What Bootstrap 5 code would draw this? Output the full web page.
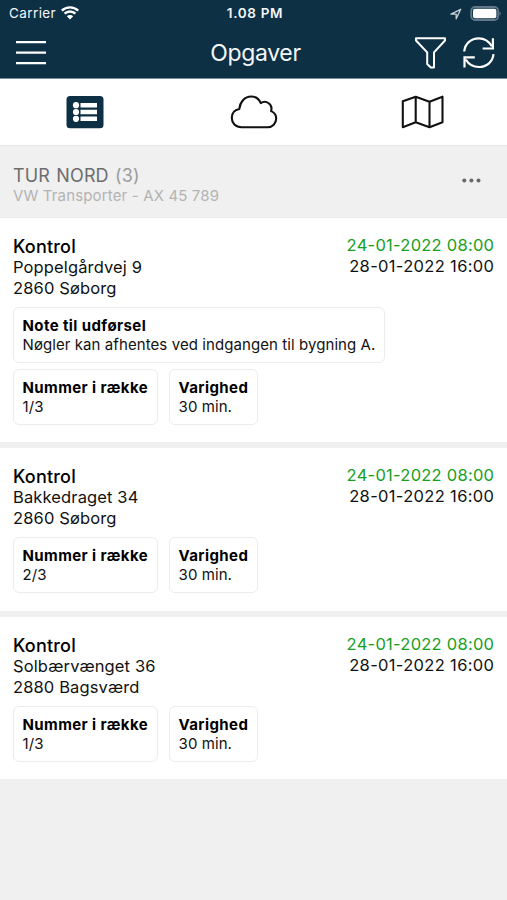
<!DOCTYPE html>
<html lang="da">
<head>
<meta charset="utf-8">
<meta name="viewport" content="width=device-width, initial-scale=1">
<title>Opgaver</title>
<link href="https://cdn.jsdelivr.net/npm/bootstrap@5.3.0/dist/css/bootstrap.min.css" rel="stylesheet">
<style>
body{font-family:Inter,"Liberation Sans",sans-serif;background:#f0f0f0;color:#111;font-size:16.5px;line-height:21px;min-height:900px}
svg{display:block;fill:none}
.top{background:#0d3045;color:#f4f7f9;height:79px;border-bottom:1px solid #7393a1}
.status{height:27px;font-size:13px;padding:0 6px 0 9px}
.status>*,.bar>*{flex:1 1 0}
.carrier{font-size:13.5px;letter-spacing:.4px}
.clock{font-size:13.5px;letter-spacing:.65px}
.bar{height:51px;padding:0 12px 0 16px}
.bar h1{font-size:23px;line-height:28px;font-weight:400;letter-spacing:-.35px}
.tabs{height:66px}
.tour{height:73px;padding:19px 26px 0 13px;border-top:1px solid #e6e6e6;border-bottom:1px solid #e9e9e9}
.tour h2{font-size:18px;line-height:21px;font-weight:400;letter-spacing:.15px;word-spacing:1px;color:#6d6d6d}
.tour h2 span{color:#9b9b9b}
.tour p{font-size:15px;line-height:20px;letter-spacing:.15px;color:#b3b3b3}
.more{margin-top:13px}
.task{padding:17px 13px 17.4px}
.task h3{font-size:18px;line-height:23px;margin-bottom:-1px;font-weight:500;letter-spacing:.2px;color:#000}
.address{letter-spacing:.13px}
.list{gap:6px}
.start,.due{letter-spacing:.25px;margin-right:-.25px}
.due{letter-spacing:.33px}
.start{color:#17a01c}
.info{border:1px solid #ececec;border-radius:6px;padding:8px 8.500px;height:56px;font-size:15px;line-height:19px;letter-spacing:.08px}
.info b{font-weight:700;color:#000;letter-spacing:.4px}
.boxes{gap:11.500px}
.second{margin-top:6px}
</style>
</head>
<body>
<header class="top">
  <div class="status d-flex align-items-center">
    <div class="d-flex align-items-center"><span class="carrier">Carrier</span>
      <svg class="ms-1" width="20" height="15" viewBox="0 0 20 15"><path d="M1.800 4.700a11.700 11.700 0 0 1 16.400 0M4.600 7.700a7.700 7.700 0 0 1 10.800 0" stroke="#fff" stroke-width="2.400"/><path d="M6.800 10.300a4.600 4.600 0 0 1 6.400 0L10 13.500z" fill="#fff"/></svg></div>
    <div class="text-center fw-semibold clock">1.08 PM</div>
    <div class="d-flex align-items-center justify-content-end gap-1">
      <svg class="me-1" width="12" height="12" viewBox="0 0 12 12"><path d="M1 6.200 10.700 1.300 6.200 10.800V6.200z" stroke="#c5d0d7" stroke-width="1.300" stroke-linejoin="round"/></svg>
      <svg width="31" height="15" viewBox="0 0 31 15"><rect x="1.200" y="1" width="27" height="13" rx="4" stroke="#607887" stroke-width="1.800"/><rect x="3" y="2.800" width="23.400" height="9.400" rx="2" fill="#fff"/><path d="M29.500 5.500v4q1.300-.5 1.300-2t-1.300-2z" fill="#607887"/></svg>
    </div>
  </div>
  <div class="bar d-flex align-items-center">
    <div><svg width="30" height="26" viewBox="0 0 30 26" stroke="#fff" stroke-width="2.300"><path d="M0 2.200h30M0 12.700h30M0 23.200h30"/></svg></div>
    <h1 class="m-0 text-center">Opgaver</h1>
    <div class="d-flex justify-content-end align-items-center">
      <svg width="32" height="32" viewBox="0 0 32 32" stroke="#fff" stroke-width="2" stroke-linejoin="round"><path d="M1 1.200h29v2.300L19 15.400V30.500h-3.200L12.200 27V15.400L1 3.500z"/></svg>
      <svg class="ms-3" width="32" height="32" viewBox="0 0 32 32" stroke="#fff" stroke-width="2.200"><path d="M1.200 14.500C2 6.500 8.300 1.300 15.700 1.300c5.700 0 10.300 3 13.100 8M29.900 1.300v10.200H19.600M30.500 17.200c-.8 8-7.100 12.800-14.500 12.800-5.600 0-10.300-2.500-13.200-7.500M1.500 30.500V20.300h10.300"/></svg>
    </div>
  </div>
</header>
<nav class="tabs row g-0 bg-white align-items-center">
  <div class="col d-flex justify-content-center"><svg width="38" height="34" viewBox="0 0 38 34"><rect x=".5" y=".9" width="37" height="32.300" rx="3.500" fill="#0d3045"/><g fill="#fff"><circle cx="10" cy="10.200" r="3.100"/><circle cx="10" cy="17" r="3.100"/><circle cx="10" cy="23.800" r="3.100"/><path d="M14.500 8H31v4.400H14.500zM14.500 14.800H31v4.400H14.500zM14.500 21.600H31v4.400H14.500z"/></g></svg></div>
  <div class="col d-flex justify-content-center"><svg width="48" height="34" viewBox="0 0 48 34" stroke="#111" stroke-width="2.100" stroke-linejoin="round"><path d="M11.500 32.200C5.500 32.200 1.800 28 1.800 23c0-4.800 3-8.200 7.500-9C10 6.500 15 1.500 21.200 1.500c4.500 0 7.800 2.400 9.600 6.600 5.300-3.500 12.300 1.200 10.300 8 3.200 1.300 5.100 4 5.100 7.400 0 4.900-3.700 8.700-8.600 8.700z"/></svg></div>
  <div class="col d-flex justify-content-center"><svg width="44" height="34" viewBox="0 0 44 34" stroke="#111" stroke-width="2.100" stroke-linejoin="round"><path d="M1.800 6.300 14.700 1.700l13.800 5.100 13-5.100v25.500l-13 5-13.800-5-12.900 5zM14.700 1.700v25.500M28.500 6.800v25.400"/></svg></div>
</nav>
<section class="tour d-flex justify-content-between">
  <div><h2 class="m-0">TUR NORD <span>(3)</span></h2><p class="m-0">VW Transporter - AX 45 789</p></div>
  <svg class="more" width="19" height="5" viewBox="0 0 19 5"><g fill="#686868"><circle cx="2.300" cy="2.500" r="2"/><circle cx="9.400" cy="2.500" r="2"/><circle cx="16.500" cy="2.500" r="2"/></g></svg>
</section>
<main class="list d-flex flex-column">
  <article class="task bg-white">
    <div class="d-flex justify-content-between"><div class="address"><h3>Kontrol</h3><div>Poppelgårdvej 9</div><div>2860 Søborg</div></div>
      <div class="text-end"><div class="start">24-01-2022 08:00</div><div class="due">28-01-2022 16:00</div></div></div>
    <div class="d-flex mt-2"><div class="info"><b>Note til udførsel</b><br>Nøgler kan afhentes ved indgangen til bygning A.</div></div>
    <div class="d-flex boxes second"><div class="info"><b>Nummer i række</b><br>1/3</div><div class="info"><b>Varighed</b><br>30 min.</div></div>
  </article>
  <article class="task bg-white">
    <div class="d-flex justify-content-between"><div class="address"><h3>Kontrol</h3><div>Bakkedraget 34</div><div>2860 Søborg</div></div>
      <div class="text-end"><div class="start">24-01-2022 08:00</div><div class="due">28-01-2022 16:00</div></div></div>
    <div class="d-flex boxes mt-2"><div class="info"><b>Nummer i række</b><br>2/3</div><div class="info"><b>Varighed</b><br>30 min.</div></div>
  </article>
  <article class="task bg-white">
    <div class="d-flex justify-content-between"><div class="address"><h3>Kontrol</h3><div>Solbærvænget 36</div><div>2880 Bagsværd</div></div>
      <div class="text-end"><div class="start">24-01-2022 08:00</div><div class="due">28-01-2022 16:00</div></div></div>
    <div class="d-flex boxes mt-2"><div class="info"><b>Nummer i række</b><br>1/3</div><div class="info"><b>Varighed</b><br>30 min.</div></div>
  </article>
</main>
<script src="https://cdn.jsdelivr.net/npm/bootstrap@5.3.0/dist/js/bootstrap.bundle.min.js"></script>
</body>
</html>
